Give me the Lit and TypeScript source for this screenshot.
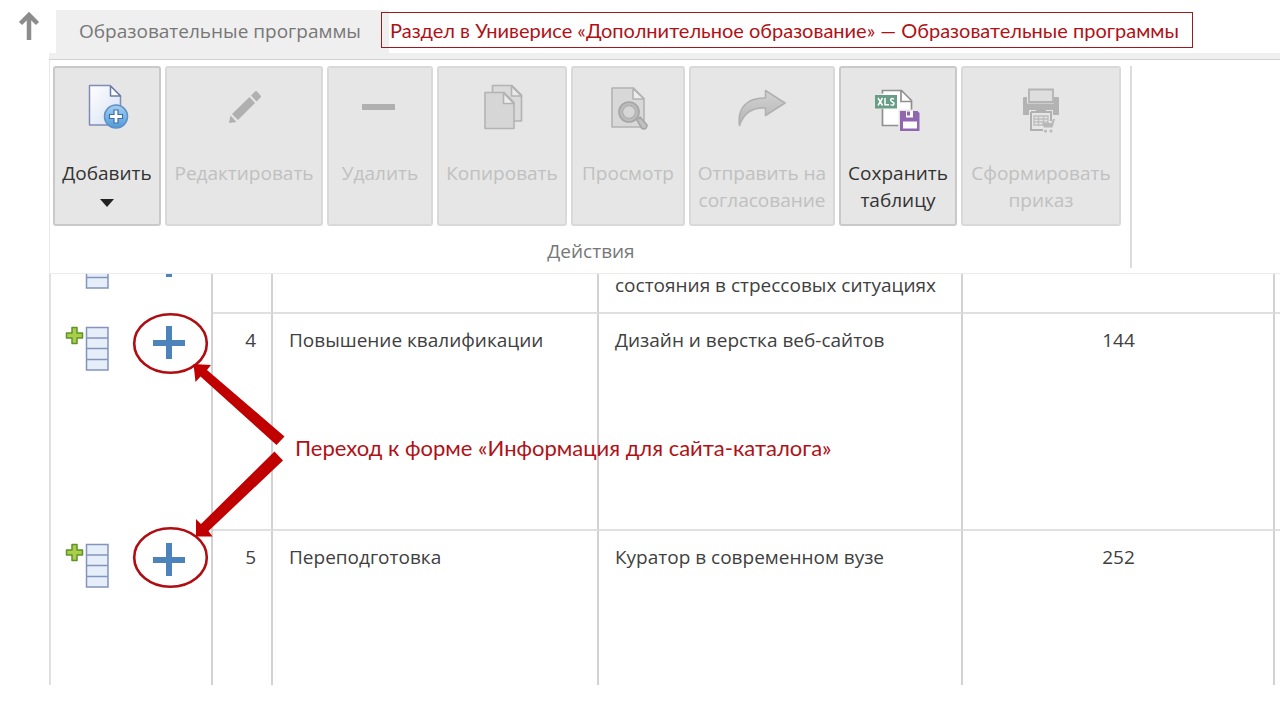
import { LitElement, html, svg, css } from "lit";
import { customElement } from "lit/decorators.js";
import { classMap } from "lit/directives/class-map.js";

const icons = {
  add: svg`
    <defs>
      <linearGradient id="pg" x1="0" y1="0" x2="1" y2="1"><stop offset="0" stop-color="#fff"/><stop offset="1" stop-color="#d5e0f3"/></linearGradient>
      <linearGradient id="bl" x1="0" y1="0" x2="0" y2="1"><stop offset="0" stop-color="#a5d0f0"/><stop offset="1" stop-color="#4f9bdb"/></linearGradient>
    </defs>
    <path d="M6.500 4.500H27L37.500 15V44H6.500Z" fill="url(#pg)" stroke="#7f8db8" stroke-width="1.500" stroke-linejoin="round"/>
    <path d="M27.500 5V15H37.500Z" fill="#fff" stroke="#6c7aa8" stroke-width="1.500" stroke-linejoin="round"/>
    <circle cx="33" cy="35.500" r="11.500" fill="url(#bl)" stroke="#5f8fc4" stroke-width="1.500"/>
    <path d="M31 29h4v4.500h4.500v4H35V42h-4v-4.500h-4.500v-4H31Z" fill="#fff" stroke="#3c6ea8" stroke-width="1.200"/>`,
  edit: svg`
    <path d="M9 42l1.500-7.500 6 6.500Z M12 33L29.500 16l5.500 6L18 39Z M31 14.500l4-4q1-1 2 0l3.500 4q1 1 0 2l-4 4Z" fill="#b0b0b0"/>`,
  remove: svg`<path d="M6 23h33v6h-33Z" fill="#b0b0b0"/>`,
  copy: svg`
    <g stroke="#b3b3b3" stroke-width="1.600" stroke-linejoin="round">
      <path d="M14.500 4.500H34L43.500 14V40H14.500Z" fill="#dadada"/><path d="M33.500 5v10h10Z" fill="#e9e9e9"/>
      <path d="M7 11.500H26L36 21.500V47.500H7Z" fill="#d6d6d6"/><path d="M25.500 12v10.500H36Z" fill="#ececec"/>
    </g>`,
  view: svg`
    <g stroke="#b3b3b3" stroke-width="1.600" stroke-linejoin="round">
      <path d="M8 7H29.500L40 17.500V46H8Z" fill="#d8d8d8"/><path d="M29 7.500V18H40Z" fill="#ededed"/>
      <path d="M33 39l3-3 7 8q0 5-5 3.500Z" fill="#c0c0c0" stroke="#a5a5a5"/>
      <circle cx="25" cy="31" r="10" fill="#bcbcbc" stroke="#a5a5a5"/><circle cx="25" cy="31" r="6.500" fill="#d6d6d6"/>
    </g>`,
  send: svg`
    <defs><linearGradient id="ar" x1="0" y1="0" x2="0" y2="1"><stop offset="0" stop-color="#d2d2d2"/><stop offset="1" stop-color="#b5b5b5"/></linearGradient></defs>
    <path d="M1.500 44.500C-1 27 9 16.500 27.500 17V9.500L47 22 27.500 34.500V27C13 26 5 34 1.500 44.500Z" fill="url(#ar)" stroke="#b0b0b0" stroke-width="1.500" stroke-linejoin="round"/>`,
  save: svg`
    <path d="M8.500 9.500H28L37.500 19V44.500H8.500Z" fill="#fff"/>
    <path d="M8.500 12.500V9.500H27.500L37.500 19.500V29M8.500 28V44.500H24.500M27 10V20.500H37.500" fill="none" stroke="#8f8f8f" stroke-width="1.700"/>
    <path d="M1 14H23V27.500H1Z" fill="#689d88"/>
    <path d="M4 17l4.500 7.500M8.500 17L4 24.500M11 17v6.700h4M20 18.200c-3-1.500-4 .3-3 1.700s3.500 1 3 3-2.500 1.300-3.500.600" fill="none" stroke="#fff" stroke-width="1.500"/>
    <path d="M24.500 28.500H46V50.500H24.500Z" fill="#e6e6e6"/>
    <path d="M26 30H43.500L45.500 32V50H26Z" fill="#9066b0"/>
    <path d="M32 30h7v6.500h-7Z M29 40.500h14v7H29Z" fill="#fff"/><path d="M33 30.500h3v4h-3Z" fill="#9066b0"/>`,
  print: svg`
    <path d="M6 19v-2q0-1 1.200-1H10v6.500H37V16h3.500q1.500 0 1.500 1v17H6Z" fill="#b3b3b3"/>
    <path d="M12 8.500H36V21H12Z" fill="#dedede" stroke="#b3b3b3" stroke-width="1.800"/>
    <path d="M12 29h24v22H12Z" fill="#e6e6e6"/>
    <path d="M14 31H34V40M14 31V49H26" fill="none" stroke="#b0b0b0" stroke-width="2"/>
    <path d="M19 32v-3h3q2-3 4 0h3v3Z" fill="#b0b0b0"/>
    <path d="M17 35h14v9H17Z M17 38h14M17 41h14M21.500 35v10M26.500 35v10" fill="none" stroke="#bdbdbd" stroke-width="1.300"/>
    <path d="M25 42h9.500l1.500-4h2l-2.500 8.500H27Z" fill="#b8b8b8"/><circle cx="28.500" cy="50" r="1.500" fill="#b8b8b8"/><circle cx="34" cy="50" r="1.500" fill="#b8b8b8"/>`,
};

const actions = [
  { icon: icons.add, label: "Добавить", enabled: true, menu: true },
  { icon: icons.edit, label: "Редактировать" },
  { icon: icons.remove, label: "Удалить" },
  { icon: icons.copy, label: "Копировать" },
  { icon: icons.view, label: "Просмотр" },
  { icon: icons.send, label: "Отправить на согласование" },
  { icon: icons.save, label: "Сохранить таблицу", enabled: true },
  { icon: icons.print, label: "Сформировать приказ" },
];

const rows = [
  { num: "", kind: "", name: html`<br />состояния в стрессовых ситуациях`, hours: "", tall: false },
  { num: "4", kind: "Повышение квалификации", name: "Дизайн и верстка веб-сайтов", hours: "144", tall: true },
  { num: "5", kind: "Переподготовка", name: "Куратор в современном вузе", hours: "252", tall: true },
];

@customElement("app-root")
export class AppRoot extends LitElement {
  static styles = css`
    :host {
      display: flex;
      flex-direction: column;
      box-sizing: border-box;
      height: 100vh;
      padding-bottom: 35px;
      overflow: hidden;
      background: #fff;
      color: #404040;
      font: 19px/27px "Open Sans", "Noto Sans", sans-serif;
    }
    button {
      font: inherit;
      color: inherit;
      margin: 0;
      padding: 0;
      border: 0;
      background: none;
      cursor: pointer;
    }
    svg { display: block; }
    .top { display: flex; align-items: flex-start; height: 53px; }
    .up { flex: none; width: 56px; padding: 11px 0 0 18px; box-sizing: border-box; }
    .tab {
      flex: none;
      box-sizing: border-box;
      width: 333px;
      height: 43px;
      margin-top: 10px;
      padding: 8px 0 0 23px;
      background: #efefef;
      color: #777;
      text-decoration: none;
      white-space: nowrap;
    }
    .note {
      box-sizing: border-box;
      position: relative;
      width: 812px;
      height: 36px;
      margin: 12px 0 0 -8px;
      padding: 0 8px;
      border: 1px solid #9c1a1e;
      font-size: 20px;
      line-height: 34px;
    }
    .red { color: #b01116; font-family: Lato, "Open Sans", sans-serif; white-space: nowrap; }
    .body { display: flex; flex-direction: column; flex: 1; min-height: 0; margin-left: 49px; }
    .strip { flex: none; height: 7px; box-sizing: border-box; background: #efefef; border-bottom: 1px solid #d2d2d2; }
    .ribbon { flex: none; display: flex; height: 213px; padding: 6px 0 0 3px; box-sizing: border-box; border-left: 1px solid #e8e8e8; }
    .group { padding-right: 9px; height: 202px; border-right: 2px solid #dcdcdc; }
    .actions { display: grid; grid-template-columns: 108px 158px 106px 130px 114px 146px 118px 160px; gap: 4px; }
    .action {
      display: flex;
      flex-direction: column;
      align-items: center;
      height: 160px;
      padding-top: 13px;
      box-sizing: border-box;
      border: 2px solid #d9d9d9;
      border-radius: 3px;
      background: #e6e6e6;
      color: #c0c0c0;
    }
    .action.enabled { border-color: #c9c9c9; color: #333; }
    .action .label { margin-top: 27px; }
    .arrow { margin-top: 12px; }
    .caption { margin-top: 12px; text-align: center; color: #777; padding-left: 8px; }
    .viewport { position: relative; flex: 1; min-height: 0; overflow: hidden; border-top: 1px solid #ececec; }
    table { width: 100%; margin-top: -42px; table-layout: fixed; border-collapse: separate; border-spacing: 0; border-left: 2px solid #e0e0e0; }
    .c-tools { width: 162px; }
    .c-num { width: 60px; }
    .c-kind { width: 326px; }
    .c-name { width: 364px; }
    .c-hours { width: 312px; }
    td {
      padding: 13px 15px 13px 16px;
      vertical-align: top;
      border-right: 2px solid #d2d2d2;
      border-bottom: 2px solid #e0e0e0;
      box-sizing: border-box;
      height: 81px;
      white-space: nowrap;
    }
    .tall td { height: 217px; }
    td.tools { border-bottom: 0; padding: 12px 14px; }
    td.num { text-align: right; }
    td.hours { text-align: center; }
    td.rest { border-right: 0; padding: 0; }
    .toolbox { display: flex; gap: 42px; align-items: flex-start; }
    .marks { position: absolute; left: 81px; top: 36px; pointer-events: none; }
    .hint { position: absolute; left: 246px; top: 160px; font-size: 22px; }
  `;

  render() {
    return html`
      <header class="top">
        <button class="up" aria-label="Наверх">
          <svg width="22" height="32" viewBox="0 0 22 32">
            <path d="M11 29V5M2.500 12.500L11 4l8.500 8.500" fill="none" stroke="#8c8c8c" stroke-width="4.500" />
          </svg>
        </button>
        <a class="tab" href="#">Образовательные программы</a>
        <div class="note red">Раздел в Универисе «Дополнительное образование» — Образовательные программы</div>
      </header>
      <main class="body">
        <div class="strip"></div>
        <section class="ribbon">
          <div class="group">
            <div class="actions">
              ${actions.map(
                (a) => html`
                  <button class=${classMap({ action: true, enabled: !!a.enabled })} ?disabled=${!a.enabled}>
                    <svg width="48" height="52" viewBox="0 0 48 52">${a.icon}</svg>
                    <span class="label">${a.label}</span>
                    ${a.menu
                      ? html`<svg class="arrow" width="14" height="8" viewBox="0 0 14 8"><path d="M0 0h14L7 8Z" fill="#222" /></svg>`
                      : ""}
                  </button>
                `
              )}
            </div>
            <div class="caption">Действия</div>
          </div>
        </section>
        <div class="viewport">
          <table>
            <colgroup>
              <col class="c-tools" /><col class="c-num" /><col class="c-kind" /><col class="c-name" /><col class="c-hours" /><col />
            </colgroup>
            <tbody>
              ${rows.map(
                (r) => html`
                  <tr class=${classMap({ tall: r.tall })}>
                    <td class="tools">
                      <div class="toolbox">
                        <button aria-label="Добавить запись">
                          <svg width="45" height="46" viewBox="0 0 45 46">
                            <path d="M7 1.500h5v5.500h5.500v5H12v5.500H7V12H1.500V7H7Z" fill="#a9cf4a" stroke="#5f9328" stroke-width="1.500" stroke-linejoin="round" />
                            <path d="M21.500 1.500h21.500v42.500h-21.500Z" fill="#e6eefa" stroke="#8494bd" stroke-width="1.500" />
                            <path d="M21.500 12h21.500M21.500 22.500h21.500M21.500 33.500h21.500" stroke="#8494bd" stroke-width="1.300" />
                          </svg>
                        </button>
                        <button aria-label="Информация для сайта-каталога">
                          <svg width="34" height="34" viewBox="0 0 34 34"><path d="M14 0h6v14h13v6H20v13h-6V20H1v-6h13Z" fill="#4d83bb" /></svg>
                        </button>
                      </div>
                    </td>
                    <td class="num">${r.num}</td>
                    <td>${r.kind}</td>
                    <td>${r.name}</td>
                    <td class="hours">${r.hours}</td>
                    <td class="rest"></td>
                  </tr>
                `
              )}
            </tbody>
          </table>
          <svg class="marks" width="160" height="290" viewBox="130 310 160 290">
            <g fill="none" stroke="#b00d12" stroke-width="2.600">
              <ellipse cx="170.500" cy="343.500" rx="36.300" ry="29.300" />
              <ellipse cx="170.500" cy="557.500" rx="36.300" ry="29.300" />
            </g>
            <path d="M193.500 364L211 365 207 370 284.500 436.500 276.500 445 200.500 376.500 195.500 382Z" fill="#c00000" />
            <path d="M196 536.500L196 519 201 524 274.500 451.500 283 460.500 208.500 531 212.500 536.500Z" fill="#c00000" />
          </svg>
          <div class="hint red">Переход к форме «Информация для сайта-каталога»</div>
        </div>
      </main>
    `;
  }
}
